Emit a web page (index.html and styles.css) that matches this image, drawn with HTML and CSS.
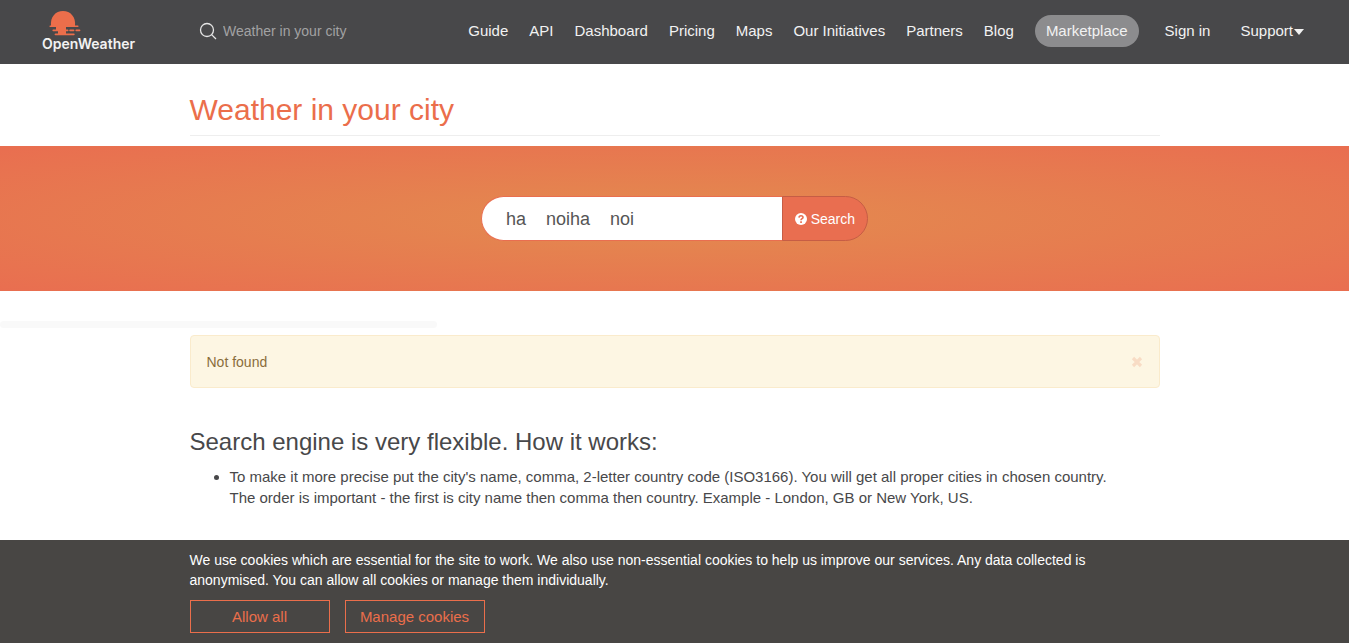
FILE: index.html
```html
<!DOCTYPE html>
<html lang="en">
<head>
<meta charset="utf-8">
<meta name="viewport" content="width=device-width, initial-scale=1">
<title>Weather in your city - OpenWeather</title>
<link rel="stylesheet" href="styles.css">
</head>
<body>
<div class="page">
  <header class="topbar">
    <a class="logo" href="#">
      <svg class="logo-sun" viewBox="0 0 34 26" width="34" height="26" aria-hidden="true">
        <path d="M3 16C2 7 7.500 1 15 1s13 6 12 15z" fill="#eb6e4b"/>
        <path d="M9 16h17v1H18v7H10v-3H8v-4z" fill="#eb6e4b"/>
        <path d="M2.200 16.300h27.600M5.200 20.400h14.500M22 20.400h3.600M28.200 20.400h3.400M7.400 24.400h18.500" fill="none" stroke="#eb6e4b" stroke-width="1.600" stroke-linecap="round"/>
      </svg>
      <span class="logo-name">OpenWeather</span>
    </a>
    <form class="top-search">
      <svg width="18" height="18" viewBox="0 0 18 18" fill="none" stroke="#e6e6e6" stroke-width="1.300" aria-hidden="true"><circle cx="8" cy="8" r="6.500"/><path d="M12.600 12.600l4.400 4.400"/></svg>
      <input type="text" aria-label="Weather in your city" placeholder="Weather in your city">
    </form>
    <nav class="menu">
      <a href="#">Guide</a>
      <a href="#">API</a>
      <a href="#">Dashboard</a>
      <a href="#">Pricing</a>
      <a href="#">Maps</a>
      <a href="#">Our Initiatives</a>
      <a href="#">Partners</a>
      <a href="#">Blog</a>
      <a class="pill" href="#">Marketplace</a>
      <a class="sign-in" href="#">Sign in</a>
      <button class="support" type="button">Support<span class="caret"></span></button>
    </nav>
  </header>

  <main>
    <div class="container">
      <h1 class="title">Weather in your city</h1>
    </div>
    <section class="hero">
      <form class="search">
        <input class="search-input" type="text" aria-label="City name" value="ha    noiha    noi">
        <button class="search-button" type="submit">
          <svg width="12" height="12" viewBox="0 0 12 12" aria-hidden="true"><circle cx="6" cy="6" r="6" fill="#fff"/><path d="M4 4.600C4.100 2.200 8 2.200 8 4.400 8 5.800 6 5.600 6 7.300" fill="none" stroke="#e96e50" stroke-width="1.600"/><path d="M5.200 8.300h1.700V10H5.200z" fill="#e96e50"/></svg>
          Search
        </button>
      </form>
    </section>
    <div class="forecast"></div>
    <div class="container">
      <div class="alert" role="alert">
        <span>Not found</span>
        <button class="close" type="button" aria-label="Close"><svg width="12" height="12" viewBox="0 0 12 12" aria-hidden="true"><path d="M2 2l8 8M10 2l-8 8" stroke="#f8dcc5" stroke-width="3.200"/></svg></button>
      </div>
      <h2 class="subtitle">Search engine is very flexible. How it works:</h2>
      <ul class="tips">
        <li>To make it more precise put the city's name, comma, 2-letter country code (ISO3166). You will get all proper cities in chosen country.<br>The order is important - the first is city name then comma then country. Example - London, GB or New York, US.</li>
      </ul>
    </div>
  </main>

  <aside class="cookies">
    <div class="container">
      <p class="cookie-text">We use cookies which are essential for the site to work. We also use non-essential cookies to help us improve our services. Any data collected is anonymised. You can allow all cookies or manage them individually.</p>
      <div class="cookie-actions">
        <button type="button">Allow all</button>
        <a href="#">Manage cookies</a>
      </div>
    </div>
  </aside>
</div>
</body>
</html>
```
FILE: styles.css
```css
* { box-sizing: border-box; }

body {
  margin: 0;
  padding-right: 17px;
  background: #fff;
  color: #48484a;
  font: 14px/20px "Liberation Sans", Arial, sans-serif;
}

a { color: inherit; text-decoration: none; }
button, input { font: inherit; color: inherit; }

.page {
  display: flex;
  flex-direction: column;
  min-height: 100vh;
}

.container {
  max-width: 970px;
  margin: 0 auto;
}

.topbar {
  display: flex;
  align-items: center;
  height: 64px;
  padding: 0 45px 2px 42px;
  background: #48484a;
  color: #f2f2f2;
}

.logo { width: 157px; }
.logo-sun { display: block; margin-left: 6px; }
.logo-name {
  display: block;
  font: 600 14px/16px Inter, sans-serif;
}

.top-search {
  display: flex;
  align-items: center;
  gap: 6px;
}
.top-search input {
  width: 160px;
  padding: 0;
  border: 0;
  outline: 0;
  background: none;
}
.top-search input::placeholder { color: #a2a2a3; opacity: 1; }

.menu {
  display: flex;
  flex: 1;
  align-items: center;
  justify-content: flex-end;
  gap: 21px;
  font-size: 15px;
  white-space: nowrap;
}
.pill {
  padding: 0 11px;
  border-radius: 17px;
  background: #8c8c8e;
  line-height: 32px;
}
.sign-in { margin: 0 9px 0 5px; }
.support {
  display: flex;
  align-items: center;
  gap: 1px;
  padding: 0;
  border: 0;
  background: none;
}
.caret {
  margin-top: 2px;
  border: 5px solid transparent;
  border-top: 6px solid #f2f2f2;
  border-bottom: 0;
}

.title {
  margin: 28px 0 10px;
  padding-bottom: 8px;
  border-bottom: 1px solid #eee;
  color: #eb6e4b;
  font-size: 30px;
  font-weight: 400;
  line-height: 35px;
}

.hero {
  padding: 50px 0;
  background: radial-gradient(#e38b4f, #e96e50);
}
.search {
  display: flex;
  width: 387px;
  height: 45px;
  margin: 0 auto;
}
.search-input {
  flex: 1;
  min-width: 0;
  padding: 0 24px;
  border: 1px solid #e96e50;
  border-right: 0;
  border-radius: 23px 0 0 23px;
  outline: 0;
  background: #fff;
  color: #555;
  font-size: 18px;
}
.search-button {
  display: flex;
  align-items: center;
  gap: 4px;
  padding: 0 12px;
  border: 1px solid #c65d45;
  border-radius: 0 23px 23px 0;
  background: #e96e50;
  color: #fff;
}

.forecast {
  width: 437px;
  max-width: 100%;
  height: 7px;
  margin: 30px 0 7px;
  border-radius: 4px;
  background: #f9f9f9;
}

.alert {
  display: flex;
  align-items: center;
  justify-content: space-between;
  padding: 16px 16px 15px;
  border: 1px solid #faebcc;
  border-radius: 4px;
  background: #fdf6e3;
  color: #8a6d3b;
}
.close {
  display: flex;
  padding: 0;
  border: 0;
  background: none;
}

.subtitle {
  margin: 40px 0 10px;
  font-size: 24px;
  font-weight: 400;
  line-height: 28px;
}

.tips {
  margin: 0;
  padding-left: 40px;
  font-size: 15px;
  line-height: 21px;
}

.cookies {
  margin-top: auto;
  padding: 10px 0;
  background: #484644;
  color: #fff;
}
.cookie-text { margin: 0 0 10px; }
.cookie-actions {
  display: flex;
  gap: 15px;
}
.cookie-actions > * {
  width: 140px;
  padding: 0;
  border: 1px solid #eb6e4b;
  background: none;
  color: #eb6e4b;
  font-size: 15px;
  line-height: 31px;
  text-align: center;
}
```
